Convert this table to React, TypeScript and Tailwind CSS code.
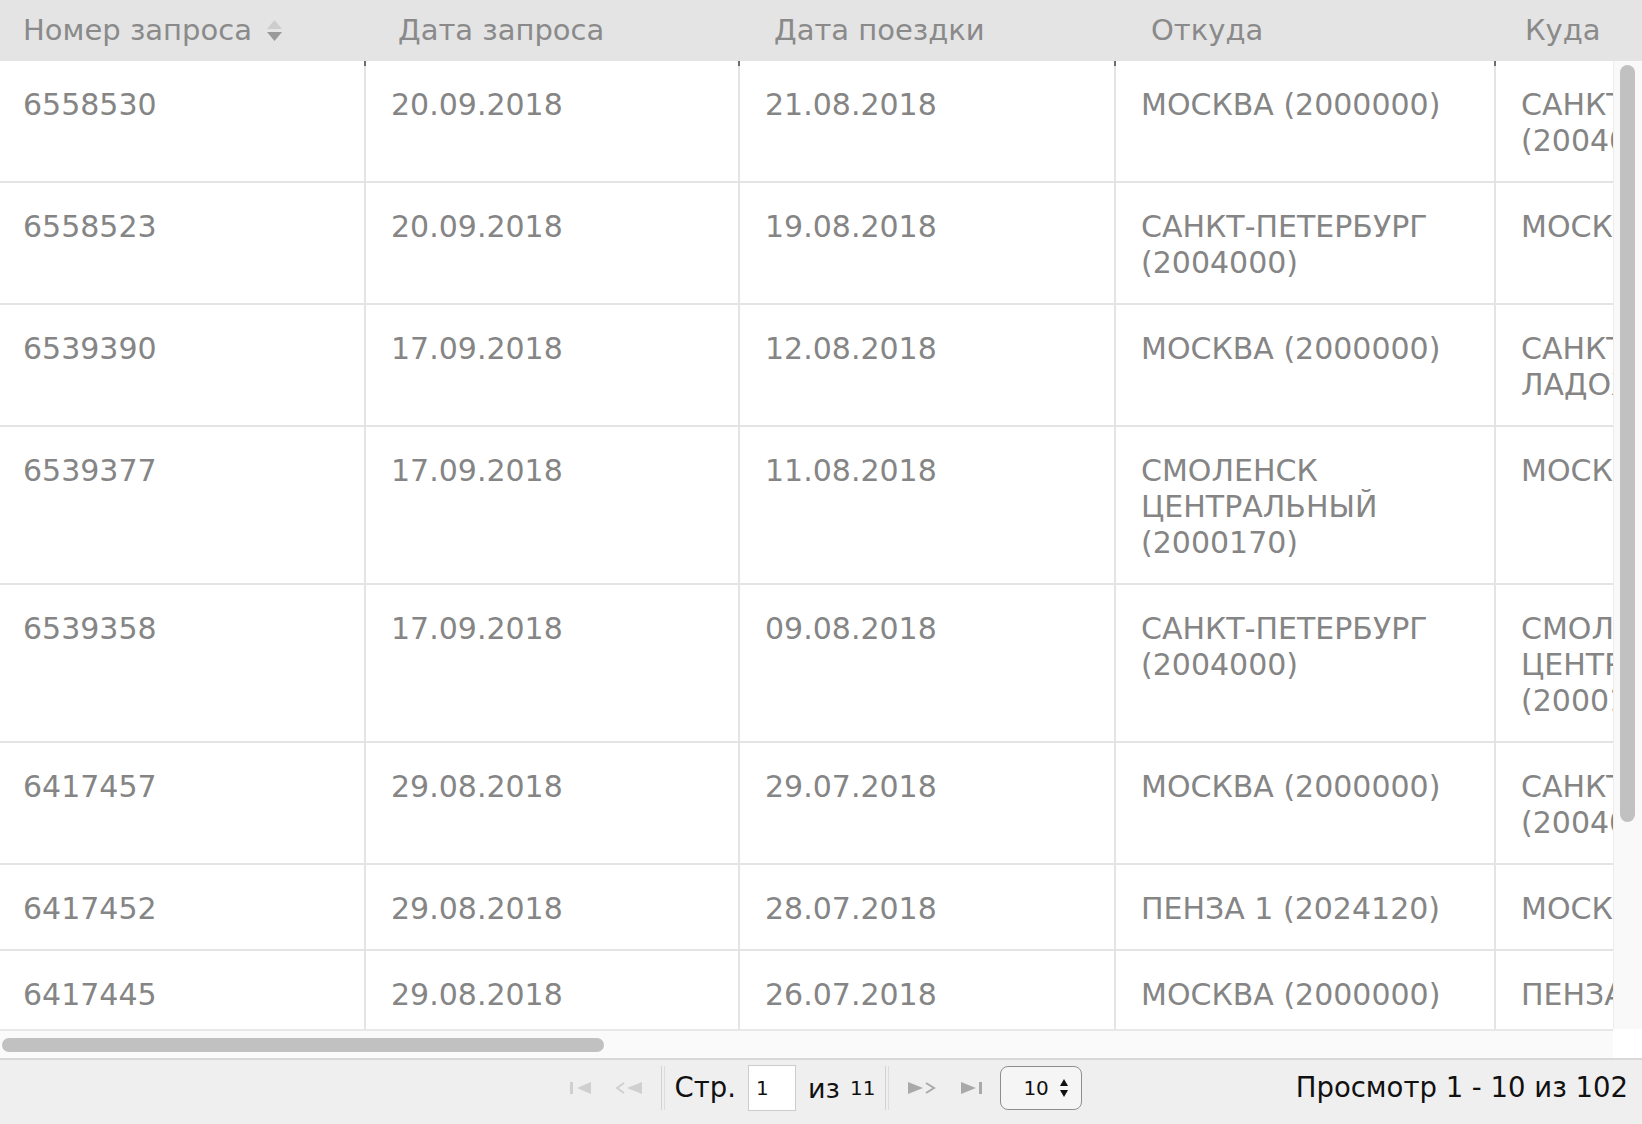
import React from 'react';

type Row = {
  id: string;
  requestDate: string;
  tripDate: string;
  from: string;
  to: string;
};

const rows: Row[] = [
  { id: '6558530', requestDate: '20.09.2018', tripDate: '21.08.2018', from: 'МОСКВА (2000000)', to: 'САНКТ-ПЕТЕРБУРГ (2004000)' },
  { id: '6558523', requestDate: '20.09.2018', tripDate: '19.08.2018', from: 'САНКТ-ПЕТЕРБУРГ (2004000)', to: 'МОСКВА (2000000)' },
  { id: '6539390', requestDate: '17.09.2018', tripDate: '12.08.2018', from: 'МОСКВА (2000000)', to: 'САНКТ-ПЕТЕРБУРГ ЛАДОЖ. (2004006)' },
  { id: '6539377', requestDate: '17.09.2018', tripDate: '11.08.2018', from: 'СМОЛЕНСК ЦЕНТРАЛЬНЫЙ (2000170)', to: 'МОСКВА (2000000)' },
  { id: '6539358', requestDate: '17.09.2018', tripDate: '09.08.2018', from: 'САНКТ-ПЕТЕРБУРГ (2004000)', to: 'СМОЛЕНСК ЦЕНТРАЛЬНЫЙ (2000170)' },
  { id: '6417457', requestDate: '29.08.2018', tripDate: '29.07.2018', from: 'МОСКВА (2000000)', to: 'САНКТ-ПЕТЕРБУРГ (2004000)' },
  { id: '6417452', requestDate: '29.08.2018', tripDate: '28.07.2018', from: 'ПЕНЗА 1 (2024120)', to: 'МОСКВА (2000000)' },
  { id: '6417445', requestDate: '29.08.2018', tripDate: '26.07.2018', from: 'МОСКВА (2000000)', to: 'ПЕНЗА 1 (2024120)' },
];

const SortIcon = () => (
  <svg width="19" height="25" viewBox="0 0 19 25" className="ml-[13px]">
    <path d="M2 11 L9.5 2 L17 11 Z" fill="#cdcdcd" />
    <path d="M2 14 L17 14 L9.5 23 Z" fill="#999999" />
  </svg>
);

const FirstIcon = ({ color }: { color: string }) => (
  <svg width="22" height="12" viewBox="0 0 22 12">
    <rect x="0" y="0" width="3" height="12" fill={color} />
    <path d="M21 0 L7 6 L21 12 Z" fill={color} />
  </svg>
);

const PrevIcon = ({ color }: { color: string }) => (
  <svg width="27" height="12" viewBox="0 0 27 12">
    <path d="M9 1 L2 6 L9 11" stroke={color} strokeWidth="2" fill="none" />
    <path d="M27 0 L12 6 L27 12 Z" fill={color} />
  </svg>
);

const NextIcon = ({ color }: { color: string }) => (
  <svg width="28" height="12" viewBox="0 0 28 12">
    <path d="M0 0 L15 6 L0 12 Z" fill={color} />
    <path d="M18 1 L26 6 L18 11" stroke={color} strokeWidth="2" fill="none" />
  </svg>
);

const LastIcon = ({ color }: { color: string }) => (
  <svg width="22" height="12" viewBox="0 0 22 12">
    <path d="M0 0 L15 6 L0 12 Z" fill={color} />
    <rect x="18" y="0" width="3" height="12" fill={color} />
  </svg>
);

const Separator = () => (
  <div className="flex h-[44px] gap-[2px]">
    <div className="w-px bg-[#d2d2d2]" />
    <div className="w-px bg-[#dcdcdc]" />
  </div>
);

const bodyCell = 'shrink-0 border-r-2 border-b-2 border-[#e4e4e4] pt-[26px] pb-[22px] pr-[20px] leading-[36px]';

const App: React.FC = () => {
  return (
    <div className="h-screen w-full flex flex-col overflow-hidden bg-white font-['DejaVu_Sans',sans-serif]">
      {/* Header */}
      <div className="h-[61px] shrink-0 bg-[#e4e4e4] flex items-center text-[29px] text-[#8a8a8a] whitespace-nowrap overflow-hidden">
        <div className="w-[373px] shrink-0 pl-[23px] flex items-center">
          <span>Номер запроса</span>
          <SortIcon />
        </div>
        <div className="w-[376px] shrink-0 pl-[25px]">Дата запроса</div>
        <div className="w-[377px] shrink-0 pl-[25px]">Дата поездки</div>
        <div className="w-[374px] shrink-0 pl-[25px]">Откуда</div>
        <div className="w-[380px] shrink-0 pl-[25px]">Куда</div>
      </div>

      {/* Body */}
      <div className="h-[997px] shrink-0 flex">
        <div className="flex-1 min-w-0 flex flex-col">
          <div className="h-[968px] overflow-hidden">
            <div className="text-[30px] text-[#858585]">
              {rows.map((row, i) => (
                <div key={row.id} className="flex">
                  <div className={`${bodyCell} w-[366px] pl-[23px] relative`}>
                    {row.id}
                    {i === 0 && <span className="absolute right-[-2px] top-0 h-[5px] w-[2px] bg-[#6e6e6e]" />}
                  </div>
                  <div className={`${bodyCell} w-[374px] pl-[25px] relative`}>
                    {row.requestDate}
                    {i === 0 && <span className="absolute right-[-2px] top-0 h-[5px] w-[2px] bg-[#6e6e6e]" />}
                  </div>
                  <div className={`${bodyCell} w-[376px] pl-[25px] relative`}>
                    {row.tripDate}
                    {i === 0 && <span className="absolute right-[-2px] top-0 h-[5px] w-[2px] bg-[#6e6e6e]" />}
                  </div>
                  <div className={`${bodyCell} w-[380px] pl-[25px] relative`}>
                    {row.from}
                    {i === 0 && <span className="absolute right-[-2px] top-0 h-[5px] w-[2px] bg-[#6e6e6e]" />}
                  </div>
                  <div className={`${bodyCell} w-[380px] pl-[25px]`}>{row.to}</div>
                </div>
              ))}
            </div>
          </div>
          {/* horizontal scrollbar */}
          <div className="h-[29px] border-t-2 border-[#e8e8e8] bg-[#fafafa] flex items-center pl-[2px]">
            <div className="w-[602px] h-[14px] rounded-full bg-[#c1c1c1]" />
          </div>
        </div>
        {/* vertical scrollbar */}
        <div className="w-[29px] shrink-0 flex flex-col">
          <div className="h-[968px] bg-[#f9f9f9] border-l border-[#ededed] pt-[4px] pl-[6px]">
            <div className="w-[15px] h-[757px] rounded-full bg-[#c1c1c1]" />
          </div>
          <div className="h-[29px] bg-white" />
        </div>
      </div>

      {/* Pager */}
      <div className="h-[66px] shrink-0 border-t-2 border-[#d8d8d8] bg-[#efefef] pb-[8px] pl-[10px] grid grid-cols-[1fr_auto_1fr] items-center text-[#111]">
        <div />
        <div className="flex items-center">
          <FirstIcon color="#cfcfcf" />
          <div className="ml-[23px]">
            <PrevIcon color="#cfcfcf" />
          </div>
          <div className="ml-[19px]">
            <Separator />
          </div>
          <span className="ml-[10px] text-[27.5px] leading-none">Стр.</span>
          <div className="ml-[12px] w-[48px] h-[46px] bg-white border border-[#cccccc] flex items-center pl-[7px] text-[20px]">
            1
          </div>
          <div className="ml-[12px] flex items-center">
            <span className="text-[27px] leading-none">из</span>
            <span className="ml-[10px] text-[20px] leading-none">11</span>
          </div>
          <div className="ml-[10px]">
            <Separator />
          </div>
          <div className="ml-[19px]">
            <NextIcon color="#a9a9a9" />
          </div>
          <div className="ml-[25px]">
            <LastIcon color="#a9a9a9" />
          </div>
          <div className="ml-[17px] w-[82px] h-[44px] rounded-[8px] border-[1.5px] border-[#8e8e8e] bg-[#f5f5f5] flex items-center pl-[22px] text-[20px]">
            <span>10</span>
            <svg width="10" height="20" viewBox="0 0 10 20" className="ml-[10px]">
              <path d="M1 8 L5 1 L9 8 Z" fill="#111" />
              <path d="M1 12 L9 12 L5 19 Z" fill="#111" />
            </svg>
          </div>
        </div>
        <div className="flex justify-end pr-[14px] text-[27.5px] whitespace-nowrap">Просмотр 1 - 10 из 102</div>
      </div>
    </div>
  );
};

export default App;
